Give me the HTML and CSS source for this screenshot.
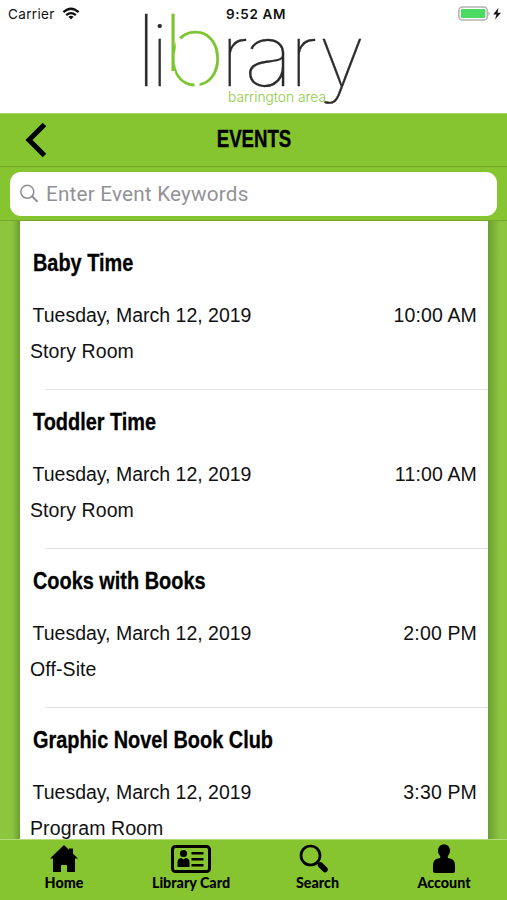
FILE: index.html
```html
<!DOCTYPE html>
<html lang="en">
<head>
<meta charset="utf-8">
<meta name="viewport" content="width=device-width">
<title>Events</title>
<link rel="stylesheet" href="styles.css">
</head>
<body>
<div class="app">
  <header class="brand">
    <svg class="logo" width="507" height="113" viewBox="0 0 507 113" role="img" aria-label="library barrington area">
      <g class="logo-word">
        <text class="tall" x="135.500" y="86">l</text>
        <text class="low" x="150.500" y="86">i</text>
        <text class="tall leaf" transform="translate(161 85) scale(1.130 .980)">b</text>
        <path class="logo-gap" d="M178.200 38v22M197 80v9M172.500 71v18"/>
        <text class="low" x="220.500" y="86">r</text>
        <text class="low" transform="translate(244.200 86) scale(1.080 1)">a</text>
        <text class="low" x="289.500" y="86">r</text>
        <text class="low" x="318.500" y="86">y</text>
      </g>
      <text class="logo-sub" x="228" y="102" textLength="98" lengthAdjust="spacingAndGlyphs">barrington area</text>
    </svg>
    <div class="status">
      <span class="carrier">Carrier</span>
      <svg class="wifi" width="18" height="14" viewBox="0 0 18 14" fill="none" stroke="#111" stroke-width="2.3"><path d="M1.400 5.200Q9-1.800 16.600 5.200M4.200 8.200Q9 4 13.800 8.200"/><path d="M6.400 9.700Q9 7.700 11.600 9.700L9 12.600Z" fill="#111" stroke="none"/></svg>
      <span class="clock">9:52 AM</span>
      <svg class="battery" width="46" height="16" viewBox="0 0 46 16"><rect x=".8" y="1" width="28.5" height="13" rx="3.5" fill="#fff" stroke="#b3b3b3" stroke-width="1.5"/><rect x="2.8" y="3" width="24.5" height="9" rx="1.2" fill="#4cd964"/><path d="M30.500 5.200q2 2.200 0 4.600z" fill="#999"/><path d="M40.500 1.700 35.200 8.500h3.300L37 13.400 43 6.700h-3.500z" fill="#111"/></svg>
    </div>
  </header>
  <nav class="titlebar">
    <svg class="back" width="22" height="36" viewBox="0 0 22 36" fill="none" stroke="#000" stroke-width="5"><path d="M19.500 2.500 4 18 19.500 33.500"/></svg>
    <h1>EVENTS</h1>
  </nav>
  <div class="searchbar">
    <div class="field">
      <svg width="20" height="20" viewBox="0 0 20 20" fill="none" stroke="#8e8e93" stroke-width="1.5"><circle cx="7.3" cy="7.8" r="6.5"/><path d="m12 12.300 5.500 5.500" stroke-width="2"/></svg>
      <span class="hint">Enter Event Keywords</span>
    </div>
  </div>
  <main class="stage">
    <div class="list">
      <article class="event"><h2>Baby Time</h2><div class="when"><span>Tuesday, March 12, 2019</span><time>10:00 AM</time></div><p>Story Room</p></article>
      <article class="event"><h2>Toddler Time</h2><div class="when"><span>Tuesday, March 12, 2019</span><time>11:00 AM</time></div><p>Story Room</p></article>
      <article class="event"><h2>Cooks with Books</h2><div class="when"><span>Tuesday, March 12, 2019</span><time>2:00 PM</time></div><p>Off-Site</p></article>
      <article class="event"><h2>Graphic Novel Book Club</h2><div class="when"><span>Tuesday, March 12, 2019</span><time>3:30 PM</time></div><p>Program Room</p></article>
    </div>
  </main>
  <footer class="tabs">
    <div class="tab"><svg width="30" height="28" viewBox="0 0 30 28"><path d="M15 0 20 4.800V3.500h4V8.800L29 13.500H26V27H18V20H12V27H4V13.500H1Z"/></svg><span>Home</span></div>
    <div class="tab"><svg width="40" height="28" viewBox="0 0 40 28"><rect x="1.5" y="1.5" width="37" height="25" rx="3" fill="none" stroke="#000" stroke-width="3"/><circle cx="12.5" cy="8.5" r="3.6"/><path d="M6.500 22v-4.500q0-4.500 4-4.500l2 1.500 2-1.500q4 0 4 4.500V22zM20.500 7h12v2.500h-12zM20.500 13h12v2.500h-12zM20.500 19h12v2.500h-12z"/></svg><span>Library Card</span></div>
    <div class="tab"><svg class="lens" width="30" height="28" viewBox="0 0 30 28" fill="none" stroke="#000"><circle cx="11.500" cy="10.500" r="9.500" stroke-width="2.700"/><path d="m18 17 3 3" stroke-width="2"/><path d="m21.500 20 4.500 4.500" stroke-width="5.500" stroke-linecap="round"/></svg><span>Search</span></div>
    <div class="tab"><svg width="24" height="28" viewBox="0 0 24 28"><path d="M12-.500c4 0 6 2.700 6 6 0 2.500-1 4.300-2.200 5.500v2q7.200.500 7.200 7V26q0 2-2 2h-18q-2 0-2-2v-6q0-6.500 7.200-7v-2C7 9.800 6 8 6 5.500c0-3.300 2-6 6-6z"/></svg><span>Account</span></div>
  </footer>
</div>
</body>
</html>
```
FILE: styles.css
```css
* { box-sizing: border-box; }
body { margin: 0; background: #fff; color: #111; font-family: "Liberation Sans", Arial, sans-serif; }
h1, h2, p { margin: 0; }
.app { width: 507px; height: 900px; display: flex; flex-direction: column; overflow: hidden; }
.brand { height: 113px; position: relative; flex: none; }
.logo { display: block; overflow: visible; }
.logo-word { font-family: Inter, sans-serif; font-weight: 100; fill: #2b2b2e; stroke: #2b2b2e; stroke-width: .3; }
.tall { font-size: 99px; }
.low { font-size: 86px; }
.leaf { fill: #7ac52d; stroke: #7ac52d; }
.logo-gap { fill: none; stroke: #fff; stroke-width: 5; }
.logo-sub { font: 300 14px Inter, sans-serif; fill: #8bcb40; }
.status { position: absolute; inset: 0 0 auto; height: 27px; display: grid; grid-template-columns: 54px 164px 1fr 46px; align-items: center; padding: 0 3px 0 8px; font: 400 13.5px Inter, sans-serif; }
.carrier { letter-spacing: .35px; }
.clock { font-weight: 600; letter-spacing: .65px; }
.titlebar { height: 54px; flex: none; background: #86c52f; position: relative; display: flex; align-items: center; justify-content: center; border-bottom: 1px solid #70a529; border-top: 1px solid #a8d66b; }
.back { position: absolute; left: 25px; top: 8px; }
h1 { font-size: 24.5px; line-height: 30px; transform: scaleX(.76); margin: 0 0 2px 1px; color: #000; -webkit-text-stroke: .4px #000; }
.searchbar { height: 54px; flex: none; background: #86c52f; padding: 5px 10px; border-bottom: 1px solid #73a52f; }
.field { height: 44px; background: #fff; border-radius: 11px; display: flex; align-items: center; padding-left: 10px; gap: 6px; }
.hint { font: 400 20.7px Roboto, sans-serif; letter-spacing: .2px; color: #929296; }
.stage { flex: 1; min-height: 0; padding: 0 19px 0 20px; background: linear-gradient(90deg, #8cc63f 12px, #6b9f31 20px, #6b9f31 488px, #8cc63f 500px); }
.list { background: #fff; height: 100%; overflow: hidden; padding-top: 10px; }
.event { height: 159px; padding: 18px 11px 0 12px; background: linear-gradient(#e3e3e5, #e3e3e5) 25px 100% / 100% 1px no-repeat; }
h2 { font-size: 23.5px; line-height: 28px; transform-origin: 0 50%; transform: scaleX(.847); white-space: nowrap; width: max-content; margin-left: 1px; color: #000; -webkit-text-stroke: .3px #000; }
.when { display: flex; justify-content: space-between; margin: 26px 0 0 .5px; font-size: 19.5px; line-height: 24px; }
.when time { letter-spacing: .15px; }
.event p { margin: 12px 0 0 -2px; font-size: 19.5px; letter-spacing: .1px; line-height: 24px; }
.tabs { height: 61px; flex: none; background: #86c52f; border-top: 1px solid #b4dc7f; display: grid; grid-template-columns: 128px 126px 127px 126px; }
.tab { display: flex; flex-direction: column; align-items: center; padding-top: 5px; font: 900 14.3px/19px Lato, sans-serif; color: #000; }
.tab svg { display: block; overflow: visible; }
.tab .lens { margin-right: 7px; }
```
